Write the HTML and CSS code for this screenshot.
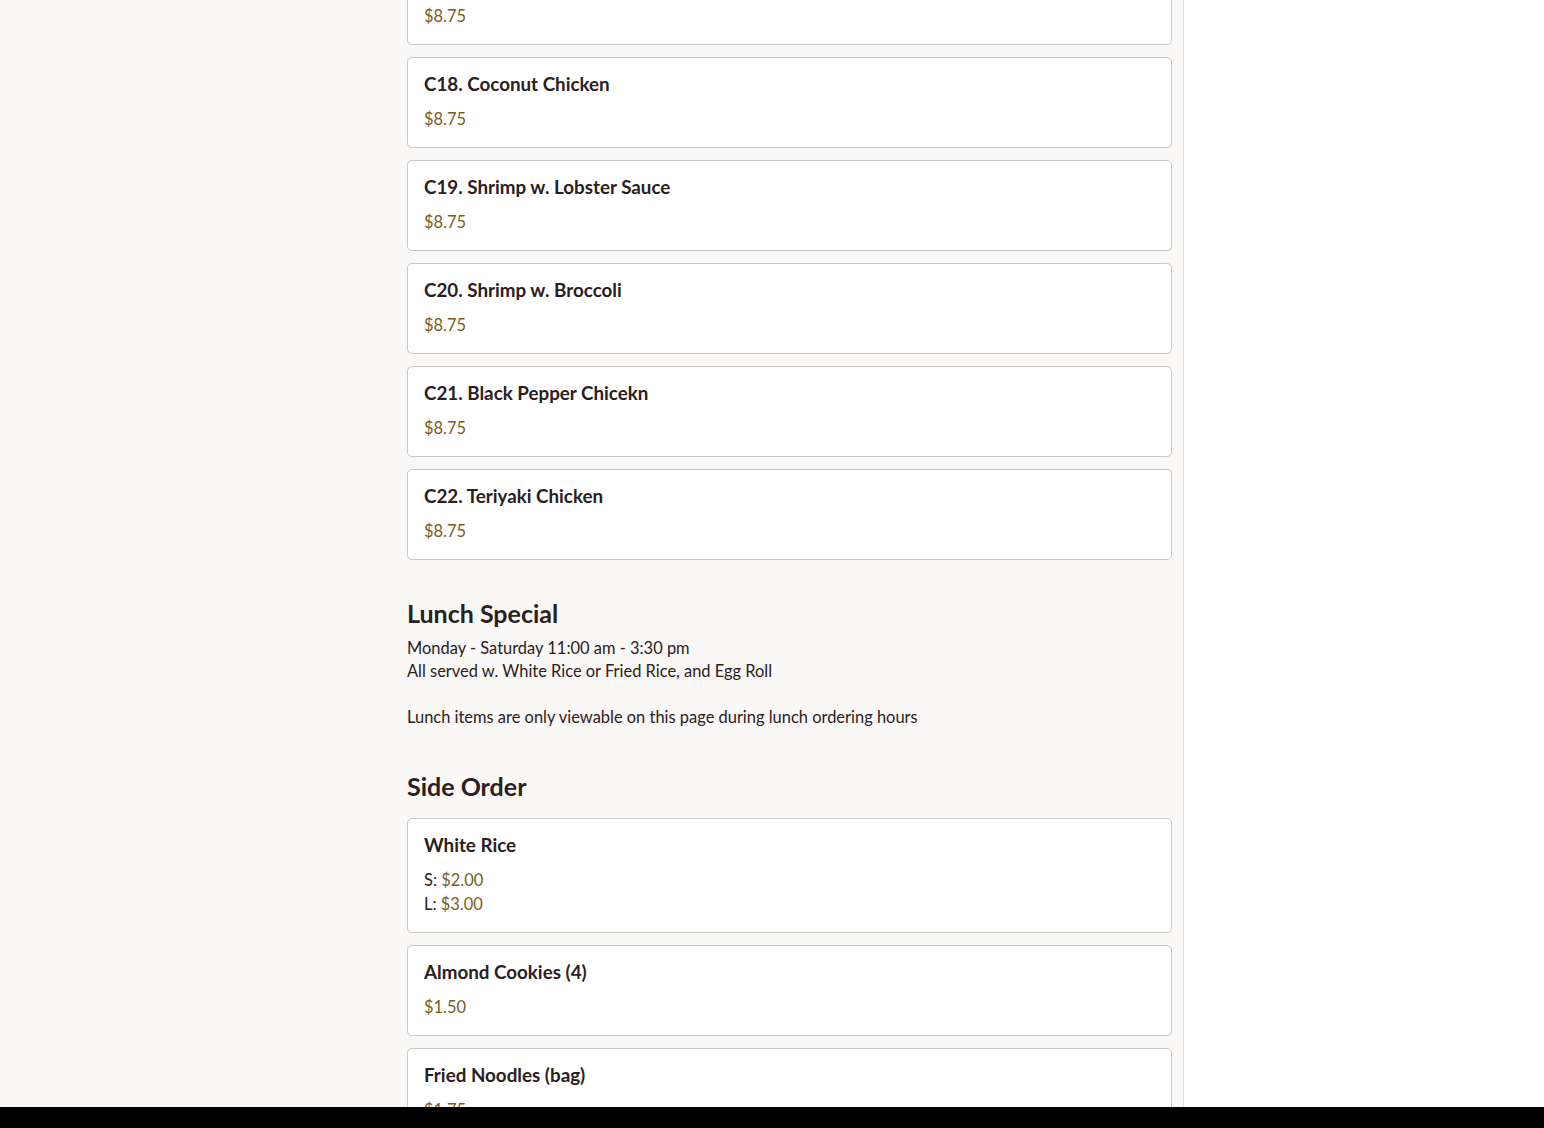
FILE: index.html
```html
<!DOCTYPE html>
<html lang="en">
<head>
<meta charset="utf-8">
<title>Menu</title>
<link rel="stylesheet" href="styles.css">
</head>
<body>
<div class="layout">
  <main class="main">
    <div class="content">
      <div class="items">
        <div class="card"><div class="name">C17. Cashew Chicken</div><div class="price">$8.75</div></div>
        <div class="card"><div class="name">C18. Coconut Chicken</div><div class="price">$8.75</div></div>
        <div class="card"><div class="name">C19. Shrimp w. Lobster Sauce</div><div class="price">$8.75</div></div>
        <div class="card"><div class="name">C20. Shrimp w. Broccoli</div><div class="price">$8.75</div></div>
        <div class="card"><div class="name">C21. Black Pepper Chicekn</div><div class="price">$8.75</div></div>
        <div class="card"><div class="name">C22. Teriyaki Chicken</div><div class="price">$8.75</div></div>
      </div>

      <section class="section">
        <h2 class="heading">Lunch Special</h2>
        <p class="desc">Monday - Saturday 11:00 am - 3:30 pm<br>All served w. White Rice or Fried Rice, and Egg Roll<br><br>Lunch items are only viewable on this page during lunch ordering hours</p>
      </section>

      <section class="section side">
        <h2 class="heading">Side Order</h2>
        <div class="items">
          <div class="card"><div class="name">White Rice</div><div class="prices"><div class="price-row">S: <span class="price">$2.00</span></div><div class="price-row">L: <span class="price">$3.00</span></div></div></div>
          <div class="card"><div class="name">Almond Cookies (4)</div><div class="price">$1.50</div></div>
          <div class="card"><div class="name">Fried Noodles (bag)</div><div class="price">$1.75</div></div>
          <div class="card"><div class="name">Egg Roll (1)</div><div class="price">$1.50</div></div>
        </div>
      </section>
    </div>
  </main>
  <aside class="aside"></aside>
</div>
<div class="bottom-bar"></div>
</body>
</html>
```
FILE: styles.css
```css
* { box-sizing: border-box; }
html, body { margin: 0; padding: 0; height: 100%; overflow: hidden; }
body {
  font-family: Lato, "Noto Sans", sans-serif;
  color: #2b2020;
  background: #ffffff;
}
.layout {
  display: flex;
  height: 100%;
}
.main {
  width: 1184px;
  flex: none;
  background: #f9f8f6;
  border-right: 1px solid #e4e1dc;
  overflow: hidden;
}
.content {
  width: 765px;
  margin-left: 407px;
  margin-top: -46px;
}
.items {
  display: flex;
  flex-direction: column;
  gap: 12px;
}
.card {
  background: #ffffff;
  border: 1px solid #c9c7c4;
  border-radius: 5px;
  padding: 14px 16px 16px 16px;
}
.name {
  font-size: 18.8px;
  font-weight: 700;
  line-height: 24px;
  color: #2b2020;
  margin-bottom: 11px;
}
.price {
  font-size: 16.45px;
  line-height: 24px;
  color: #7a5c1e;
}
.price-row {
  font-size: 16.45px;
  line-height: 24px;
  color: #2b2020;
}
.section { margin-top: 37px; }
.side { margin-top: 41px; }
.heading {
  margin: 0;
  font-size: 25px;
  font-weight: 700;
  line-height: 32px;
  color: #2b2020;
}
.desc {
  margin: 8px 0 0 0;
  font-size: 16.45px;
  line-height: 23px;
  color: #2b2020;
}
.side .heading { margin-bottom: 16px; }
.bottom-bar {
  position: fixed;
  left: 0;
  right: 0;
  bottom: 0;
  height: 21px;
  background: #000;
}
```
